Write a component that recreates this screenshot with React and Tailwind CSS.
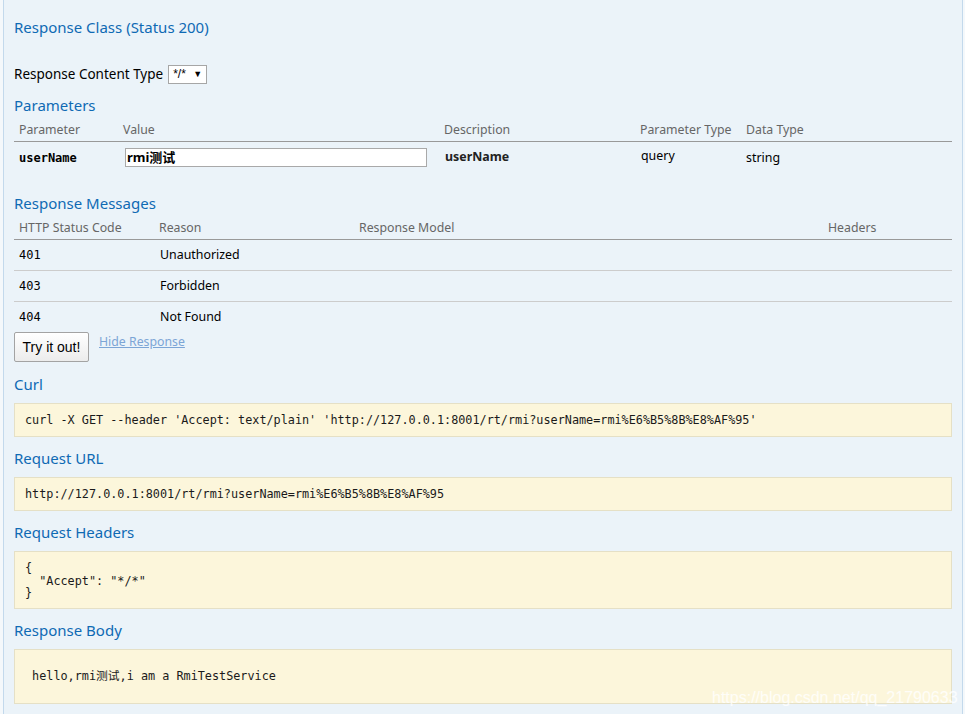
import React from "react";

const sans = "font-['Noto_Sans','Noto_Sans_CJK_SC',sans-serif]";
const mono = "font-['DejaVu_Sans_Mono','Noto_Sans_CJK_SC',monospace]";

// section headings in the swagger operation body
function Heading({ children, className = "" }) {
  return (
    <h4 className={`h-5 leading-[19px] text-[15px] text-[#0f6ab4] ${className}`}>
      {children}
    </h4>
  );
}

function CodeBlock({ children, className = "" }) {
  return (
    <pre
      className={`mt-2 border border-[#e5e0c6] bg-[#fcf6db] px-[10px] text-[11.8px] leading-[12.5px] text-[#1a1a1a] ${mono} ${className}`}
    >
      {children}
    </pre>
  );
}

const responses = [
  { code: "401", reason: "Unauthorized" },
  { code: "403", reason: "Forbidden" },
  { code: "404", reason: "Not Found" },
];

export default function App() {
  return (
    <div className={`relative min-h-screen bg-[#f4f8fb] ${sans}`}>
      <div className="ml-[3px] min-h-[714px] w-[960px] border-x border-[#c3d9ec] bg-[#ebf3f9] px-[10px] pt-[18px]">
        <Heading>Response Class (Status 200)</Heading>

        {/* content type */}
        <div className="mt-[26px] flex h-5 items-center gap-[5px] text-[13.5px] text-black">
          <span>Response Content Type</span>
          <div className="flex h-[19px] w-[39px] items-center justify-between border border-[#a6a6a6] bg-white px-[4px] font-['Liberation_Sans',sans-serif] text-[12px] leading-none">
            <span>*/*</span>
            <span className="text-[9px]">▼</span>
          </div>
        </div>

        <Heading className="mt-[12px]">Parameters</Heading>
        <div className="grid h-[26px] grid-cols-[104px_321px_196px_106px_1fr] items-center border-b border-[#999] pt-[3px] text-[12.3px] text-[#666]">
          <div className="pl-[5px]">Parameter</div>
          <div className="pl-[5px]">Value</div>
          <div className="pl-[5px]">Description</div>
          <div className="pl-[5px]">Parameter Type</div>
          <div className="pl-[5px]">Data Type</div>
        </div>
        <div className="grid h-[31px] grid-cols-[104px_321px_196px_106px_1fr] items-center text-[12.4px] text-black">
          <div className={`pl-[5px] text-[12px] font-bold ${mono}`}>userName</div>
          <div className="pl-[7px]">
            <input
              readOnly
              value="rmi测试"
              className="block h-[19px] w-[302px] border border-[#a9a9a9] bg-white px-px text-[13px] font-bold text-black outline-none"
            />
          </div>
          <div className="pl-[6px] font-bold text-[#222]">userName</div>
          <div className="pl-[6px] -mt-[2px]">query</div>
          <div className="pl-[5px] mt-[2px]">string</div>
        </div>

        <Heading className="mt-[21px]">Response Messages</Heading>
        <div className="grid h-[26px] grid-cols-[140px_200px_469px_1fr] items-center border-b border-[#999] pt-[3px] text-[12.3px] text-[#666]">
          <div className="pl-[5px]">HTTP Status Code</div>
          <div className="pl-[5px]">Reason</div>
          <div className="pl-[5px]">Response Model</div>
          <div className="pl-[5px]">Headers</div>
        </div>
        {responses.map((r, i) => (
          <div
            key={r.code}
            className={`grid grid-cols-[140px_200px_469px_1fr] items-center text-[12.4px] text-black ${
              i < responses.length - 1 ? "h-[31px] border-b border-[#ccc]" : "h-[30px]"
            }`}
          >
            <div className={`pl-[5px] text-[12px] ${mono}`}>{r.code}</div>
            <div className="pl-[6px]">{r.reason}</div>
            <div></div>
            <div></div>
          </div>
        ))}

        <div className="flex items-start gap-[10px]">
          <button className="h-[30px] w-[75px] rounded-[2px] border border-[#a3a3a3] bg-gradient-to-b from-white to-[#ececec] font-['Liberation_Sans',sans-serif] text-[14px] text-black">
            Try it out!
          </button>
          <a className="text-[12.3px] leading-5 text-[#7ca5d6] underline">Hide Response</a>
        </div>

        <Heading className="mt-[13px]">Curl</Heading>
        <CodeBlock className="flex h-[34px] items-center">
          curl -X GET --header 'Accept: text/plain' 'http://127.0.0.1:8001/rt/rmi?userName=rmi%E6%B5%8B%E8%AF%95'
        </CodeBlock>

        <Heading className="mt-[12px]">Request URL</Heading>
        <CodeBlock className="flex h-[34px] items-center">
          http://127.0.0.1:8001/rt/rmi?userName=rmi%E6%B5%8B%E8%AF%95
        </CodeBlock>

        <Heading className="mt-[12px]">Request Headers</Heading>
        <CodeBlock className="h-[58px] pt-[10px]">{`{
  "Accept": "*/*"
}`}</CodeBlock>

        <Heading className="mt-[12px]">Response Body</Heading>
        <CodeBlock className="flex h-[55px] items-center">
          {" hello,rmi测试,i am a RmiTestService"}
        </CodeBlock>
      </div>

      {/* csdn watermark */}
      <div className="absolute left-[712px] top-[686px] font-['Liberation_Sans',sans-serif] text-[16px] text-white/80">
        https://blog.csdn.net/qq_21790633
      </div>
    </div>
  );
}
